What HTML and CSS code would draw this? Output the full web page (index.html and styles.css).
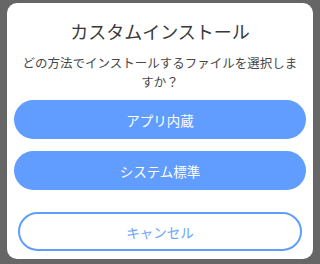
FILE: index.html
```html
<!DOCTYPE html>
<html lang="ja">
<head>
    <meta charset="UTF-8">
    <meta name="viewport" content="width=device-width, initial-scale=1.0">
    <title>カスタムインストール</title>
    <link rel="stylesheet" href="styles.css">
</head>
<body>
    <div class="dialog">
        <h1 class="dialog-title">カスタムインストール</h1>
        <p class="dialog-text">どの方法でインストールするファイルを選択しますか？</p>
        <div class="choices">
            <button class="btn btn-fill">アプリ内蔵</button>
            <button class="btn btn-fill">システム標準</button>
        </div>
        <button class="btn btn-cancel">キャンセル</button>
    </div>
</body>
</html>
```

FILE: styles.css
```css
* {
    margin: 0;
    padding: 0;
    box-sizing: border-box;
}
body {
    font-family: "Noto Sans CJK JP", "Noto Sans", sans-serif;
    background: #666666;
    width: 320px;
    height: 264px;
    overflow: hidden;
    padding: 3px 7px 0;
}
.dialog {
    background: #ffffff;
    border-radius: 10px;
    height: 256px;
    padding: 15px 7px 8px;
    display: flex;
    flex-direction: column;
}
.dialog-title {
    font-size: 18px;
    font-weight: 400;
    line-height: 26px;
    color: #383838;
    text-align: center;
}
.dialog-text {
    font-size: 12.5px;
    line-height: 19px;
    color: #484848;
    text-align: center;
    margin: 9px 6px 0;
}
.choices {
    display: flex;
    flex-direction: column;
    gap: 12px;
    margin-top: 9px;
}
.btn {
    font-family: inherit;
    font-size: 13.5px;
    height: 39px;
    border-radius: 20px;
    border: none;
    width: 100%;
}
.btn-fill {
    background: #619dfe;
    color: #ffffff;
}
.btn-cancel {
    margin: 22px 4px 0;
    width: auto;
    background: #ffffff;
    border: 2px solid #619dfe;
    color: #6aa3ff;
}
```
